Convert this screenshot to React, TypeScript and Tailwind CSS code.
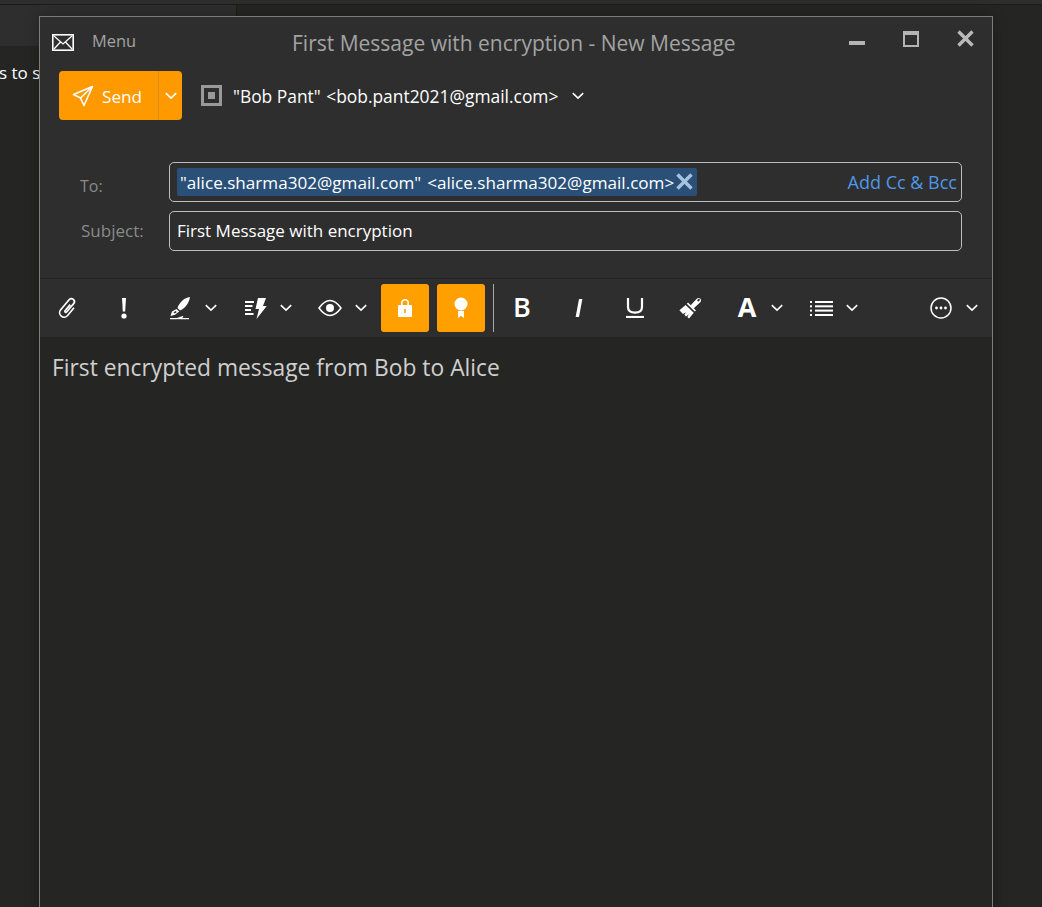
import React from 'react';

const font = { fontFamily: '"Open Sans", "Noto Sans", sans-serif' };

const Chevron = ({ className = 'text-white' }: { className?: string }) => (
  <svg width="12" height="8" viewBox="0 0 12 8" className={className} fill="none" stroke="currentColor" strokeWidth="1.6">
    <path d="M0.8 1.2 L6 6.2 L11.2 1.2" />
  </svg>
);

const Toolbar = () => (
  <div className="flex items-center h-[60px] bg-[#2e2e2e] border-y border-[#232422] text-white">
    <div className="w-[56px] flex justify-center">
      <svg width="24" height="24" viewBox="0 0 24 24" fill="none" stroke="white" strokeWidth="1.7">
        <path transform="rotate(40 12 12)" d="M16.5 8 V18 a4.5 4.5 0 0 1 -9 0 V5 a3 3 0 0 1 6 0 V16 a1 1 0 0 1 -2 0 V8" />
      </svg>
    </div>
    <div className="w-[56px] flex justify-center">
      <svg width="6" height="21" viewBox="0 0 6 21" fill="white">
        <path d="M1 0 H5 L4.2 13.5 H1.8 Z" />
        <circle cx="3" cy="18" r="2.6" />
      </svg>
    </div>
    <div className="w-[18px]" />
    <svg width="20" height="23" viewBox="0 0 20 23" fill="white">
      <path d="M20 0 C14 1 9.5 5 7.5 11 L10 13.5 C15.5 11 19 6 20 0 Z" />
      <path fillRule="evenodd" d="M6.5 12 L2 14.5 L0.5 19 L5 17.8 L9.2 14.6 Z M3.4 15.4 L5.6 14 L6.8 15 L4.8 16.4 Z" />
      <path d="M0 21.6 H7 L13 19.6 L10 21.6 H19" fill="none" stroke="white" strokeWidth="1.2" />
    </svg>
    <div className="ml-[15px]"><Chevron /></div>
    <div className="w-[28px]" />
    <svg width="22" height="21" viewBox="0 0 22 21" fill="white">
      <rect x="0" y="3" width="9" height="2" />
      <rect x="0" y="7" width="7.5" height="2" />
      <rect x="0" y="11" width="6" height="2" />
      <rect x="0" y="15" width="8.5" height="2" />
      <path d="M13 0 H21 L18 8 H21.8 L11.5 21 L14 11 H10.5 Z" />
    </svg>
    <div className="ml-[13px]"><Chevron /></div>
    <div className="w-[26px]" />
    <svg width="24" height="18" viewBox="0 0 24 18" fill="none" stroke="white" strokeWidth="1.5">
      <path d="M1 9 C5 3.5 8.5 1.5 12 1.5 C15.5 1.5 19 3.5 23 9 C19 14.5 15.5 16.5 12 16.5 C8.5 16.5 5 14.5 1 9 Z" />
      <circle cx="12" cy="9" r="4" fill="white" stroke="none" />
    </svg>
    <div className="ml-[13px]"><Chevron /></div>
    <div className="w-[14px]" />
    <div className="w-[48px] h-[48px] bg-[#ff9f00] rounded-[3px] flex items-center justify-center">
      <svg width="14" height="20" viewBox="0 0 14 20" fill="white">
        <path fillRule="evenodd" d="M3 7 V4.8 C3 2.4 4.8 1 7 1 C9.2 1 11 2.4 11 4.8 V7 H13 C13.6 7 14 7.4 14 8 V18 C14 18.6 13.6 19 13 19 H1 C0.4 19 0 18.6 0 18 V8 C0 7.4 0.4 7 1 7 Z M4.6 7 H9.4 V4.8 C9.4 3.4 8.3 2.6 7 2.6 C5.7 2.6 4.6 3.4 4.6 4.8 Z M6.2 11 V15 H7.8 V11 Z" />
      </svg>
    </div>
    <div className="w-[48px] h-[48px] ml-[8px] bg-[#ff9f00] rounded-[3px] flex items-center justify-center">
      <svg width="14" height="22" viewBox="0 0 14 22" fill="white">
        <circle cx="7" cy="7" r="6.5" />
        <path d="M4 14 H10 V21 L7 18.8 L4 21 Z" />
      </svg>
    </div>
    <div className="w-px h-[48px] ml-[8px] bg-[#a8a8a8]" />
    <div className="w-[56px] flex justify-center text-[27px] leading-none font-semibold -mt-[3px]" style={font}>B</div>
    <div className="w-[57px] flex justify-center">
      <svg width="8" height="18" viewBox="0 0 8 18" fill="white">
        <path d="M4 0 H7.4 L4 18 H0.6 Z" />
      </svg>
    </div>
    <div className="w-[56px] flex justify-center">
      <svg width="18" height="20" viewBox="0 0 18 20" fill="none" stroke="white" strokeWidth="2.2">
        <path d="M2 0 V9 C2 13 5 14.6 9 14.6 C13 14.6 16 13 16 9 V0" />
        <path d="M0 19 H18" />
      </svg>
    </div>
    <div className="w-[54px] flex justify-center">
      <svg width="22" height="22" viewBox="0 0 22 22" fill="white">
        <path fillRule="evenodd" d="M11.5 8.5 L17.5 2 C18.6 0.8 20.4 0.8 21.4 1.8 C22.4 3 22 4.6 21 5.6 L14.5 11.5 Z M18.8 2.6 A1 1 0 1 0 20.4 3.6 A1 1 0 1 0 18.8 2.6 Z" />
        <path d="M7.8 6.8 L9 5.6 L17 13.4 L15.8 14.6 Z" />
        <path d="M6.6 8 L14.8 15.8 L10 21.5 L8.4 20 L9.8 17.2 L7 19.4 L5.4 17.8 L7 15.2 L4 17 L0.4 13.2 Z" />
      </svg>
    </div>
    <div className="w-[26px] ml-[17px] flex justify-center text-[27px] leading-none font-bold -mt-[4px]" style={font}>A</div>
    <div className="ml-[11px]"><Chevron /></div>
    <div className="w-[27px]" />
    <svg width="23" height="15" viewBox="0 0 23 15" fill="white">
      <rect x="0" y="0" width="2" height="2" />
      <rect x="0" y="4.3" width="2" height="2" />
      <rect x="0" y="8.6" width="2" height="2" />
      <rect x="0" y="13" width="2" height="2" />
      <rect x="5" y="0" width="18" height="2" />
      <rect x="5" y="4.3" width="18" height="2" />
      <rect x="5" y="8.6" width="18" height="2" />
      <rect x="5" y="13" width="18" height="2" />
    </svg>
    <div className="ml-[13px]"><Chevron /></div>
    <div className="w-[72px]" />
    <svg width="22" height="22" viewBox="0 0 22 22" fill="none" stroke="white" strokeWidth="1.5">
      <circle cx="11" cy="11" r="10" />
      <circle cx="6.5" cy="11" r="1.4" fill="white" stroke="none" />
      <circle cx="11" cy="11" r="1.4" fill="white" stroke="none" />
      <circle cx="15.5" cy="11" r="1.4" fill="white" stroke="none" />
    </svg>
    <div className="ml-[14px]"><Chevron /></div>
  </div>
);

const App: React.FC = () => {
  return (
    <div className="relative w-[1042px] h-[907px] overflow-hidden bg-[#252624]" style={font}>
      {/* Main window behind the composer */}
      <div className="h-[4px] bg-[#2e2e2e]" />
      <div className="flex h-[42px] border-t border-[#1c1d1b]">
        <div className="w-[237px] bg-[#2e2e2e] border-r border-[#1c1d1b]" />
      </div>
      <div className="mt-[16px] w-[40px] overflow-hidden whitespace-nowrap text-[17px] leading-[22px] text-white">
        <span className="-ml-[1px]">s to s</span>
      </div>

      {/* Composer window */}
      <div className="absolute left-[39px] top-[16px] w-[954px] h-[900px] flex flex-col border border-[#7d7d7d] bg-[#252624] shadow-[0_0_14px_rgba(0,0,0,0.25)]">
        <div className="h-[261px] bg-[#2e2e2e] flex flex-col">
          <div className="flex items-center h-[50px] relative">
            <svg width="22" height="17" viewBox="0 0 22 17" className="ml-[12px]">
              <rect width="22" height="17" fill="white" />
              <rect x="1.6" y="1.6" width="18.8" height="13.8" fill="#2e2e2e" />
              <path d="M2 2 L11 10 L20 2 M2 15 L8.5 8 M20 15 L13.5 8" stroke="white" strokeWidth="1.3" fill="none" />
            </svg>
            <span className="ml-[18px] text-[16.4px] text-[#a3a3a3] -mt-[2px]">Menu</span>
            <div className="absolute left-[252px] top-[12px] text-[21px] leading-[28px] whitespace-nowrap text-[#a3a3a3]">First Message with encryption - New Message</div>
            <div className="absolute right-0 top-0 flex">
              <div className="absolute right-[127px] top-[24px] w-[16px] h-[4px] bg-[#b4b4b4]" />
              <div className="absolute right-[73px] top-[14px] w-[16px] h-[16px] border-2 border-t-4 border-[#b4b4b4]" />
              <svg width="17" height="17" viewBox="0 0 17 17" className="absolute right-[18px] top-[13px]" stroke="#b9b9b9" strokeWidth="3.4">
                <path d="M1.5 1.5 L15.5 15.5 M15.5 1.5 L1.5 15.5" />
              </svg>
            </div>
          </div>

          <div className="flex items-center h-[49px] ml-[19px] mt-[4px]">
            <div className="flex h-[49px] w-[123px] rounded-[4px] bg-[#ff9900] text-white">
              <div className="w-[100px] flex items-center border-r border-[#db8a0c]">
                <svg width="22" height="22" viewBox="0 0 22 22" fill="none" stroke="white" strokeWidth="1.6" strokeLinejoin="round" className="ml-[13px]">
                  <path d="M20.5 1.5 L1.5 9.5 L8.5 13 L12 20.5 Z M20.5 1.5 L8.5 13" />
                </svg>
                <span className="ml-[8px] text-[17.2px] mt-[2px]">Send</span>
              </div>
              <div className="flex-1 flex items-center justify-center"><Chevron /></div>
            </div>
            <div className="ml-[19px] w-[21px] h-[21px] bg-[#999999] flex items-center justify-center">
              <div className="w-[15px] h-[15px] bg-[#2e2e2e] flex items-center justify-center">
                <div className="w-[7px] h-[7px] bg-[#999999]" />
              </div>
            </div>
            <span className="ml-[11px] text-[17.4px] text-white whitespace-nowrap mt-[2px]">
              <span className="mr-[1px]">"Bob Pant"</span> &lt;bob.pant2021@gmail.com&gt;
            </span>
            <div className="ml-[14px]"><Chevron /></div>
          </div>

          <div className="mt-[42px] flex items-center h-[40px]">
            <span className="w-[129px] pl-[40px] text-[16px] text-[#8a8a8a] mt-[8px]">To:</span>
            <div className="w-[793px] h-[40px] border border-[#bdbdbd] rounded-[5px] flex items-center pl-[7px] pr-[4px]">
              <div className="flex items-center h-[28px] bg-[#2a5078] rounded-[2px] pl-[3px] text-[17.1px] text-white whitespace-nowrap">
                <span className="mt-[2px]">"alice.sharma302@gmail.com"</span>
                <span className="ml-[6px] mt-[2px]">&lt;alice.sharma302@gmail.com&gt;</span>
                <svg width="17" height="17" viewBox="0 0 17 17" stroke="#a5c3df" strokeWidth="3.4" className="ml-[2px] mr-[4px] -mt-[2px]">
                  <path d="M1.5 1.5 L15.5 15.5 M15.5 1.5 L1.5 15.5" />
                </svg>
              </div>
              <span className="ml-auto text-[18px] text-[#4f97e8] whitespace-nowrap">Add Cc &amp; Bcc</span>
            </div>
          </div>

          <div className="mt-[9px] flex items-center h-[40px]">
            <span className="w-[129px] pl-[41px] text-[17px] text-[#8a8a8a]">Subject:</span>
            <div className="w-[793px] h-[40px] border border-[#bdbdbd] rounded-[5px] flex items-center pl-[7px] text-[17px] text-white">
              First Message with encryption
            </div>
          </div>
        </div>

        <Toolbar />

        <div className="pl-[12px] pt-[14px] text-[22.8px] leading-[32px] text-[#cfcfcf]">First encrypted message from Bob to Alice</div>
      </div>
    </div>
  );
};

export default App;
